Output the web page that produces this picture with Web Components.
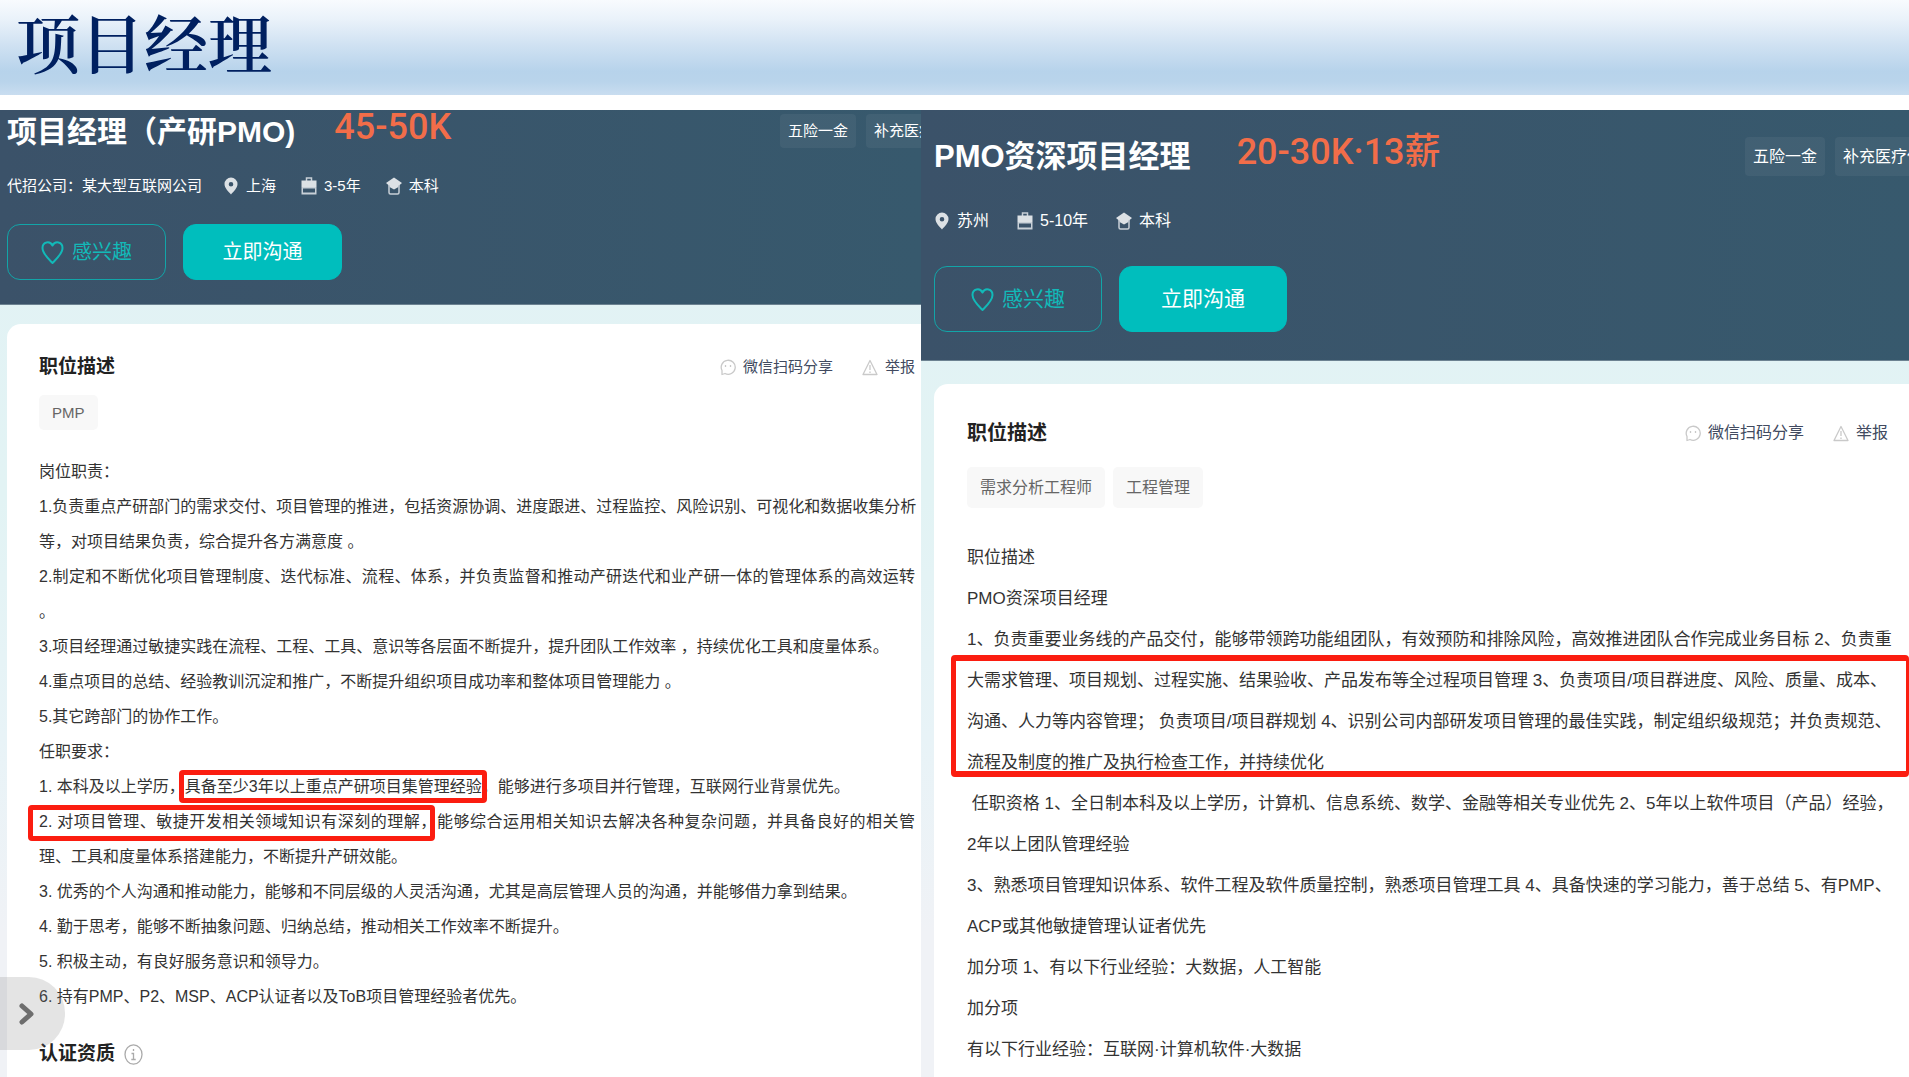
<!DOCTYPE html>
<html lang="zh-CN">
<head>
<meta charset="utf-8">
<title>项目经理</title>
<style>
  html, body { margin: 0; height: 100%; }
  body { background: #fff; overflow: hidden; font-family: "Liberation Sans", "Noto Sans CJK SC", sans-serif; color: #333; }
  job-panel.first {
    --gutter: 7px; --title: 30px; --title-lh: 44px; --head-top: 0px; --salary-lh: 34px; --salary-gap: 39px;
    --perk-w: 141px; --perk-h: 34px; --meta: 15px; --meta-gap: 20px; --meta-space: 25px; --act-gap: 26px;
    --btn-w: 159px; --btn-h: 56px; --btn-font: 20px; --head-bottom: 25px; --card-gap: 19px;
    --card-pad: 29px 6px 0 32px; --h: 19px; --h-lh: 28px; --tags-gap: 14px; --tag-h: 35px;
    --text-gap: 24px; --text: 16px; --line: 35px;
  }
  job-panel.second {
    --gutter: 13px; --title: 31px; --title-lh: 48px; --head-top: 23px; --salary-lh: 38px; --salary-gap: 46px;
    --perk-w: 164px; --perk-h: 39px; --meta: 16px; --meta-gap: 28px; --meta-space: 28px; --act-gap: 33px;
    --btn-w: 168px; --btn-h: 66px; --btn-font: 21px; --head-bottom: 29px; --card-gap: 23px;
    --card-pad: 34px 21px 0 33px; --h: 20px; --h-lh: 30px; --tags-gap: 19px; --tag-h: 41px;
    --text-gap: 29px; --text: 17px; --line: 41px;
  }
</style>
</head>
<body>
<slide-page>
  <slide-title slot="title">项目经理</slide-title>

  <job-panel class="first">
    <span slot="title">项目经理（产研PMO)</span>
    <span slot="salary">45-50K</span>
    <perk-tag slot="perks">五险一金</perk-tag>
    <perk-tag slot="perks">补充医疗保险</perk-tag>
    <meta-item slot="meta">代招公司：某大型互联网公司</meta-item>
    <meta-item slot="meta" icon="pin">上海</meta-item>
    <meta-item slot="meta" icon="case">3-5年</meta-item>
    <meta-item slot="meta" icon="cap">本科</meta-item>
    <skill-tag slot="tags">PMP</skill-tag>
    <p>岗位职责：</p>
    <p>1.负责重点产研部门的需求交付、项目管理的推进，包括资源协调、进度跟进、过程监控、风险识别、可视化和数据收集分析</p>
    <p>等，对项目结果负责，综合提升各方满意度 。</p>
    <p class="full">2.制定和不断优化项目管理制度、迭代标准、流程、体系，并负责监督和推动产研迭代和业产研一体的管理体系的高效运转</p>
    <p>。</p>
    <p>3.项目经理通过敏捷实践在流程、工程、工具、意识等各层面不断提升，提升团队工作效率 ，持续优化工具和度量体系。</p>
    <p>4.重点项目的总结、经验教训沉淀和推广，不断提升组织项目成功率和整体项目管理能力 。</p>
    <p>5.其它跨部门的协作工作。</p>
    <p>任职要求：</p>
    <p>1. 本科及以上学历，<red-mark>具备至少3年以上重点产研项目集管理经验</red-mark>，能够进行多项目并行管理，互联网行业背景优先。</p>
    <p class="full"><red-mark class="wide">2. 对项目管理、敏捷开发相关领域知识有深刻的理解，</red-mark>能够综合运用相关知识去解决各种复杂问题，并具备良好的相关管</p>
    <p>理、工具和度量体系搭建能力，不断提升产研效能。</p>
    <p>3. 优秀的个人沟通和推动能力，能够和不同层级的人灵活沟通，尤其是高层管理人员的沟通，并能够借力拿到结果。</p>
    <p>4. 勤于思考，能够不断抽象问题、归纳总结，推动相关工作效率不断提升。</p>
    <p>5. 积极主动，有良好服务意识和领导力。</p>
    <p>6. 持有PMP、P2、MSP、ACP认证者以及ToB项目管理经验者优先。</p>
    <cert-heading slot="after">认证资质</cert-heading>
  </job-panel>

  <job-panel class="second">
    <span slot="title">PMO资深项目经理</span>
    <span slot="salary">20-30K·13薪</span>
    <perk-tag slot="perks">五险一金</perk-tag>
    <perk-tag slot="perks">补充医疗保险</perk-tag>
    <meta-item slot="meta" icon="pin">苏州</meta-item>
    <meta-item slot="meta" icon="case">5-10年</meta-item>
    <meta-item slot="meta" icon="cap">本科</meta-item>
    <skill-tag slot="tags">需求分析工程师</skill-tag>
    <skill-tag slot="tags">工程管理</skill-tag>
    <p>职位描述</p>
    <p>PMO资深项目经理</p>
    <p>1、负责重要业务线的产品交付，能够带领跨功能组团队，有效预防和排除风险，高效推进团队合作完成业务目标 2、负责重</p>
    <red-mark class="block">
      <p>大需求管理、项目规划、过程实施、结果验收、产品发布等全过程项目管理 3、负责项目/项目群进度、风险、质量、成本、</p>
      <p>沟通、人力等内容管理； 负责项目/项目群规划 4、识别公司内部研发项目管理的最佳实践，制定组织级规范；并负责规范、</p>
      <p>流程及制度的推广及执行检查工作，并持续优化</p>
    </red-mark>
    <p> 任职资格 1、全日制本科及以上学历，计算机、信息系统、数学、金融等相关专业优先 2、5年以上软件项目（产品）经验，</p>
    <p>2年以上团队管理经验</p>
    <p>3、熟悉项目管理知识体系、软件工程及软件质量控制，熟悉项目管理工具 4、具备快速的学习能力，善于总结 5、有PMP、</p>
    <p>ACP或其他敏捷管理认证者优先</p>
    <p>加分项 1、有以下行业经验：大数据，人工智能</p>
    <p>加分项</p>
    <p>有以下行业经验：互联网·计算机软件·大数据</p>
  </job-panel>

  <drawer-toggle slot="toggle"></drawer-toggle>
</slide-page>

<script>
const define = (name, html) => {
  const template = document.createElement('template');
  template.innerHTML = html.trim();
  customElements.define(name, class extends HTMLElement {
    constructor() {
      super();
      this.attachShadow({ mode: 'open' }).append(template.content.cloneNode(true));
    }
  });
};

define('slide-page', `
  <style>
    :host { display: flex; flex-direction: column; min-height: 100vh; position: relative; }
    main { flex: 1; display: grid; grid-template-columns: 921fr 988fr; margin-top: 15px; }
  </style>
  <slot name="title"></slot>
  <main><slot></slot></main>
  <slot name="toggle"></slot>`);

define('slide-title', `
  <style>
    :host { display: block; background: linear-gradient(#f8fbfe 0, #eaf2fa 20%, #cfe1f2 48%, #b7d3eb 75%, #b9d4eb 86%, #c9ddf0 100%); }
    h1 { margin: 0; padding: 0 16px 15px; font: 600 64px/80px "Noto Serif CJK SC", "Liberation Serif", "Noto Sans CJK SC", serif; color: #002060; }
  </style>
  <h1><slot></slot></h1>`);

define('job-panel', `
  <style>
    :host { display: flex; flex-direction: column; min-width: 0; overflow: hidden; background: linear-gradient(#e2f2f5 0, #e2f3f4 40%, #e8f3f7 65%, #f0f2f6 85%); }
    header { background: linear-gradient(90deg, #3b5269, #37596d); border-bottom: 1px solid #6c8291; box-sizing: border-box; padding: var(--head-top) 0 calc(var(--head-bottom) - 1px) var(--gutter); color: #fff; }
    .top { display: flex; align-items: flex-start; }
    h2 { margin: 0; font-size: var(--title); line-height: var(--title-lh); font-weight: 700; white-space: nowrap; }
    .salary { margin-left: var(--salary-gap); font: 500 36px/var(--salary-lh) Roboto, "Noto Sans CJK SC", sans-serif; color: #f26d49; white-space: nowrap; }
    .perks { flex: 0 0 var(--perk-w); min-width: 0; margin: 4px 0 0 auto; display: flex; gap: 10px; }
    .meta { display: flex; gap: var(--meta-space); margin-top: var(--meta-gap); font-size: var(--meta); line-height: 24px; }
    .actions { display: flex; gap: 17px; margin-top: var(--act-gap); }
    button { box-sizing: border-box; width: var(--btn-w); height: var(--btn-h); border: 1px solid #12a5a8; border-radius: 13px; background: none; color: #12b9b8; font: var(--btn-font)/28px "Liberation Sans", "Noto Sans CJK SC", sans-serif; display: flex; align-items: center; justify-content: center; gap: 8px; padding: 0; }
    button.primary { background: #00bebd; border-color: #00bebd; color: #fff; }
    button svg { width: 23px; height: 25px; }
    article { flex: 1; margin: var(--card-gap) 0 0 var(--gutter); background: #fff; border-radius: 14px 0 0 0; padding: var(--card-pad); }
    .bar { display: flex; align-items: center; gap: 29px; line-height: var(--h-lh); }
    h3 { margin: 0 auto 0 0; font-size: var(--h); color: #222; }
    a { display: flex; align-items: center; gap: 7px; font-size: var(--meta); color: #414a60; text-decoration: none; }
    a svg { width: 16px; height: 17px; }
    .tags { display: flex; gap: 8px; margin-top: var(--tags-gap); font-size: var(--meta); }
    .text { margin-top: var(--text-gap); font-size: var(--text); line-height: var(--line); white-space: nowrap; }
    ::slotted(p) { margin: 0; white-space: pre; }
    ::slotted(p.full) { white-space: normal; text-align: justify; text-align-last: justify; }
  </style>
  <header>
    <div class="top">
      <h2><slot name="title"></slot></h2>
      <div class="salary"><slot name="salary"></slot></div>
      <div class="perks"><slot name="perks"></slot></div>
    </div>
    <div class="meta"><slot name="meta"></slot></div>
    <div class="actions">
      <button type="button"><svg viewBox="0 0 23 25" fill="none" stroke="currentColor" stroke-width="2" stroke-linejoin="round"><path d="M11.5 23C7 18.500 1.500 13.500 1.500 8C1.500 1.500 9 .500 11.500 5.500C14 .500 21.500 1.500 21.500 8C21.500 13.500 16 18.500 11.500 23Z"/></svg>感兴趣</button>
      <button type="button" class="primary">立即沟通</button>
    </div>
  </header>
  <article>
    <div class="bar">
      <h3>职位描述</h3>
      <a href="#share"><svg viewBox="0 0 16 17" fill="none" stroke="#c9c9c9" stroke-width="1.300"><path d="M2 15.500V11.500A7 7 0 1 1 5 14.500Z" stroke-linejoin="round"/><path d="M5.500 6v2M10.500 6v2"/></svg>微信扫码分享</a>
      <a href="#report"><svg viewBox="0 0 16 17" fill="none" stroke="#c9c9c9" stroke-width="1.300" stroke-linejoin="round"><path d="M8 1.500L15 15.500H1Z"/><path d="M8 6v5M8 12.500v1.500"/></svg>举报</a>
    </div>
    <div class="tags"><slot name="tags"></slot></div>
    <div class="text"><slot></slot></div>
    <slot name="after"></slot>
  </article>`);

define('perk-tag', `
  <style>:host { display: block; flex: none; height: var(--perk-h); line-height: var(--perk-h); padding: 0 8px; border-radius: 4px; background: rgba(255,255,255,.05); font-size: var(--meta); color: #fff; white-space: nowrap; }</style>
  <slot></slot>`);

define('skill-tag', `
  <style>:host { display: block; height: var(--tag-h); line-height: var(--tag-h); padding: 0 13px; border-radius: 5px; background: #f8f8f8; color: #666; white-space: nowrap; }</style>
  <slot></slot>`);

define('red-mark', `<style>
    :host { position: relative; }
    :host::after { content: ""; position: absolute; inset: -8px -5px -8px -6px; border: 5px solid #fb1d10; border-radius: 4px; pointer-events: none; }
    :host(.wide)::after { inset: -8px 2px -11px -11px; }
    :host(.block) { display: block; white-space: nowrap; }
    :host(.block)::after { inset: -5px -21px 6px -16px; border-width: 6px 3px 6px 5px; }
    ::slotted(p) { margin: 0; white-space: pre; }
  </style><slot></slot>`);

define('cert-heading', `
  <style>
    :host { display: flex; align-items: center; gap: 9px; margin-top: 26px; }
    h3 { margin: 0; font-size: var(--h); line-height: var(--h-lh); color: #222; }
    svg { width: 19px; height: 21px; }
  </style>
  <h3><slot></slot></h3>
  <svg viewBox="0 0 19 21" fill="none" stroke="#aaa" stroke-width="1.300"><ellipse cx="9.500" cy="10.500" rx="8.500" ry="9.700"/><path d="M9.500 5v2M7.500 9.500h2v6M7.300 15.500h4.400"/></svg>`);

define('drawer-toggle', `
  <style>
    :host { position: absolute; left: 0; bottom: 27px; }
    button { display: flex; align-items: center; width: 65px; height: 73px; padding: 0 0 0 18px; border: 0; border-radius: 0 36px 36px 0; background: rgba(120,120,120,.2); }
    svg { width: 18px; height: 24px; }
  </style>
  <button type="button" aria-label="展开"><svg viewBox="0 0 18 24" fill="none" stroke="#6d6d6d" stroke-width="5" stroke-linecap="round" stroke-linejoin="round"><path d="M4 4L13 12L4 20"/></svg></button>`);

const icons = {
  pin: '<svg viewBox="0 0 16 18"><path fill="#dce1e5" fill-rule="evenodd" d="M8 .500A6.500 6.500 0 0 1 14.500 7C14.500 11 10.500 14.500 8 17.500C5.500 14.500 1.500 11 1.500 7A6.500 6.500 0 0 1 8 .500ZM8 5A2.300 2.300 0 1 0 8 9.600A2.300 2.300 0 1 0 8 5Z"/></svg>',
  case: '<svg viewBox="0 0 16 18"><path fill="none" stroke="#c8d0d7" stroke-width="1.500" d="M5.500 4V1h5V4"/><path fill="#dce1e5" d="M.5 3.500h15V10H.5z"/><path fill="#c8d0d7" fill-rule="evenodd" d="M.5 10h15v7.500H.5zM2 11.500v4h12v-4z"/></svg>',
  cap: '<svg viewBox="0 0 16 18"><path fill="#dce1e5" d="M8 .500L16 6L12.500 9V10L8 12.500L3.500 10V9L0 6Z"/><path fill="none" stroke="#c8d0d7" stroke-width="1.500" d="M3 8v7.500q0 1.500 1.500 1.500h7q1.500 0 1.500-1.500V8"/></svg>'
};
customElements.define('meta-item', class extends HTMLElement {
  constructor() {
    super();
    this.attachShadow({ mode: 'open' });
  }
  connectedCallback() {
    this.shadowRoot.innerHTML = `
      <style>
        :host { display: flex; align-items: center; gap: 7px; white-space: nowrap; }
        :host([icon="pin"]:not(:first-of-type)) { margin-left: -4px; }
        svg { width: 16px; height: 18px; }
      </style>${icons[this.getAttribute('icon')] || ''}<span><slot></slot></span>`;
  }
});
</script>
</body>
</html>
